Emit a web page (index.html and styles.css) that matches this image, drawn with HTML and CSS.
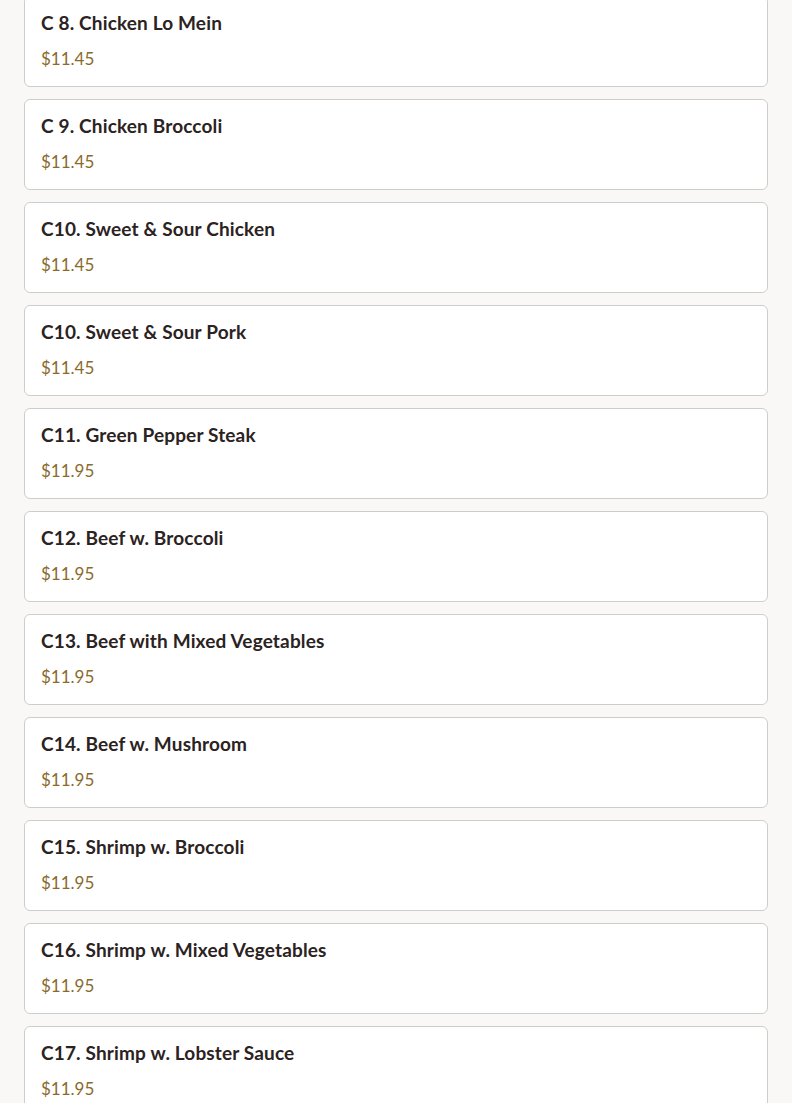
FILE: index.html
```html
<!DOCTYPE html>
<html>
<head>
<meta charset="utf-8">
<link rel="stylesheet" href="styles.css">
</head>
<body>
<div class="menu">
  <div class="item"><div class="name">C 8. Chicken Lo Mein</div><div class="price">$11.45</div></div>
  <div class="item"><div class="name">C 9. Chicken Broccoli</div><div class="price">$11.45</div></div>
  <div class="item"><div class="name">C10. Sweet &amp; Sour Chicken</div><div class="price">$11.45</div></div>
  <div class="item"><div class="name">C10. Sweet &amp; Sour Pork</div><div class="price">$11.45</div></div>
  <div class="item"><div class="name">C11. Green Pepper Steak</div><div class="price">$11.95</div></div>
  <div class="item"><div class="name">C12. Beef w. Broccoli</div><div class="price">$11.95</div></div>
  <div class="item"><div class="name">C13. Beef with Mixed Vegetables</div><div class="price">$11.95</div></div>
  <div class="item"><div class="name">C14. Beef w. Mushroom</div><div class="price">$11.95</div></div>
  <div class="item"><div class="name">C15. Shrimp w. Broccoli</div><div class="price">$11.95</div></div>
  <div class="item"><div class="name">C16. Shrimp w. Mixed Vegetables</div><div class="price">$11.95</div></div>
  <div class="item"><div class="name">C17. Shrimp w. Lobster Sauce</div><div class="price">$11.95</div></div>
</div>
</body>
</html>
```

FILE: styles.css
```css
html, body {
  margin: 0;
  padding: 0;
  background: #f9f8f6;
  font-family: Lato, "Noto Sans", sans-serif;
  overflow: hidden;
}
.menu {
  display: flex;
  flex-direction: column;
  gap: 12px;
  padding: 0 24px;
  margin-top: -4px;
}
.item {
  background: #ffffff;
  border: 1px solid #cfcdca;
  border-radius: 6px;
  height: 91px;
  box-sizing: border-box;
  padding: 14px 16px 0 16px;
  display: flex;
  flex-direction: column;
  gap: 12px;
}
.name {
  font-size: 19px;
  font-weight: 700;
  color: #2b2222;
  line-height: 24px;
  letter-spacing: 0.15px;
}
.price {
  font-size: 17px;
  color: #8a6a2c;
  line-height: 24px;
}
```
